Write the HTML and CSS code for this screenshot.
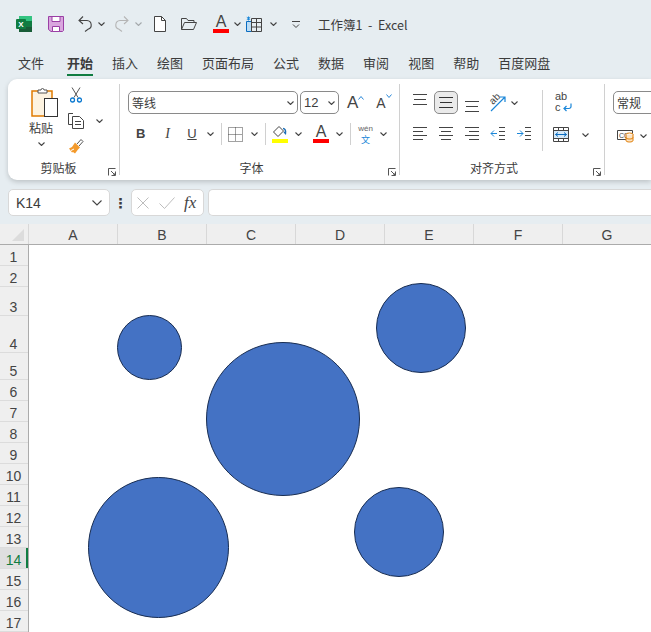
FILE: index.html
```html
<!DOCTYPE html>
<html lang="zh-CN">
<head>
  <meta charset="UTF-8" />
  <title>工作簿1 - Excel</title>
  <link rel="stylesheet" href="styles.css">
</head>
<body>
  <svg class="sprite">
    <symbol id="chev" viewBox="0 0 7 4"><path d="M.5.5l3 3 3-3" fill="none" stroke="#444" stroke-width="1.1"/></symbol>
    <symbol id="launcher" viewBox="0 0 8 8"><path d="M.5 7.5V.5h7M7.5 3.5v4h-4M3 3l4 4M5 7h2V5" fill="none" stroke="#555"/></symbol>
  </svg>

  <div class="titlebar">
    <svg class="qa-excel" viewBox="0 0 16 16">
      <rect x="3" y="0" width="13" height="16" rx="1" fill="#21a366"/>
      <rect x="3" y="0" width="13" height="5" rx="1" fill="#33c481"/>
      <rect x="9" y="5" width="7" height="5.500" fill="#107c41"/>
      <rect x="3" y="10.500" width="13" height="5.500" fill="#185c37"/>
      <rect x="0" y="3" width="10" height="10" rx="1" fill="#107c41"/>
      <text x="5" y="11" class="logo-x">X</text>
    </svg>
    <svg class="qa-save" viewBox="0 0 16 16">
      <path d="M.5.5h15v14l-1 1H3l-2.500-2z" fill="#d9a6de" stroke="#9a3fa5"/>
      <path d="M4 .5h8v5H4zM4.500 10.500h7v5h-7z" fill="#fff" stroke="#9a3fa5"/>
    </svg>
    <svg class="qa-undo" viewBox="0 0 15 16">
      <path d="M5 .5L1 4.500 5 8M1 4.500h8a4.500 4.500 0 0 1 1 8.800L7 15.500" fill="none" stroke="#444" stroke-width="1.100"/>
    </svg>
    <svg class="chev chev-undo"><use href="#chev"/></svg>
    <svg class="qa-redo" viewBox="0 0 15 16">
      <path d="M10 .5L14 4.500 10 8M14 4.500H6a4.500 4.500 0 0 0-1 8.800L8 15.500" fill="none" stroke="#b5b5b5" stroke-width="1.100"/>
    </svg>
    <svg class="chev chev-redo"><use href="#chev"/></svg>
    <svg class="qa-new" viewBox="0 0 12 16">
      <path d="M.5.5h7l4 4v11H.5z" fill="#fff" stroke="#444"/><path d="M7.500.5v4h4" fill="none" stroke="#444"/>
    </svg>
    <svg class="qa-open" viewBox="0 0 16 12">
      <path d="M.5 11.500V.5h5l1.500 2h6v2M.5 11.500h12l3-7H3.500z" fill="none" stroke="#444"/>
    </svg>
    <div class="color-a qa-color"><span>A</span><i class="bar-red"></i></div>
    <svg class="chev chev-color"><use href="#chev"/></svg>
    <svg class="qa-table" viewBox="0 0 16 16">
      <path d="M.5 5.500h5v10h-5z" fill="#bcdcf4" stroke="#0a6cc0"/>
      <path d="M5.500 2.500h10v13h-10zM5.500 6.500h10M5.500 11h10M10.500 2.500v13" fill="none" stroke="#444"/>
      <path d="M2.500.5v4M.8 1.300l3.400 2.400M4.200 1.300L.8 3.700" stroke="#1a86d8" fill="none"/>
    </svg>
    <svg class="chev chev-table"><use href="#chev"/></svg>
    <svg class="qa-more" viewBox="0 0 8 7">
      <path d="M0 .5h8M1 3.500l3 3 3-3" fill="none" stroke="#444"/>
    </svg>
    <span class="doc-title">工作簿1  -  Excel</span>
  </div>

  <div class="tabs">
    <span class="tab">文件</span>
    <span class="tab active">开始</span>
    <span class="tab">插入</span>
    <span class="tab">绘图</span>
    <span class="tab">页面布局</span>
    <span class="tab">公式</span>
    <span class="tab">数据</span>
    <span class="tab">审阅</span>
    <span class="tab">视图</span>
    <span class="tab">帮助</span>
    <span class="tab">百度网盘</span>
  </div>

  <div class="ribbon">
    <section class="group group-clip">
      <div class="group-body clip-body">
        <div class="paste">
          <svg class="paste-icon" viewBox="0 0 27 30">
            <rect x="1" y="4" width="20" height="25" fill="#fdf3e0" stroke="#e07b00" stroke-width="1.500"/>
            <path d="M7 6V3h3a1.500 1.500 0 0 1 3 0h3v3z" fill="#fff" stroke="#555"/>
            <rect x="13.500" y="11.500" width="13" height="18" fill="#fff" stroke="#333"/>
          </svg>
          <span class="paste-label">粘贴</span>
          <svg class="chev"><use href="#chev"/></svg>
        </div>
        <div class="clip-tools">
          <svg class="tool-cut" viewBox="0 0 12 16">
            <path d="M2 .5l6 10M10 .5l-6 10" stroke="#555" fill="none"/>
            <circle cx="2.500" cy="13" r="2" fill="none" stroke="#0a78d0" stroke-width="1.300"/>
            <circle cx="9.500" cy="13" r="2" fill="none" stroke="#0a78d0" stroke-width="1.300"/>
          </svg>
          <div class="copy-row">
            <svg class="tool-copy" viewBox="0 0 16 16">
              <path d="M5 .5H.5v11H4" fill="none" stroke="#444"/>
              <path d="M4.500 3.500h7l4 4v8h-11zM7 8.500h6M7 11.500h6" fill="#fff" stroke="#444"/>
            </svg>
            <svg class="chev"><use href="#chev"/></svg>
          </div>
          <svg class="tool-brush" viewBox="0 0 16 16">
            <path d="M9 5L13 .5l2 2-4 4.500" fill="#fff" stroke="#555"/>
            <path d="M7 3.500l5 5-2 2-3 4-2-1.500-1 .5-3-4 3-1.500z" fill="#f39a2c"/>
            <path d="M6 10l-3 1.500" stroke="#fff"/>
          </svg>
        </div>
      </div>
      <div class="group-label">剪贴板<svg class="launcher"><use href="#launcher"/></svg></div>
    </section>

    <section class="group group-font">
      <div class="group-body font-body">
        <div class="tool-row font-top">
          <div class="combo combo-font">等线<svg class="chev"><use href="#chev"/></svg></div>
          <div class="combo combo-size">12<svg class="chev"><use href="#chev"/></svg></div>
          <div class="size-btn grow">A<svg viewBox="0 0 6 4"><path d="M.5 3.500l2.500-3 2.500 3" fill="none" stroke="#2b88d8"/></svg></div>
          <div class="size-btn shrink">A<svg viewBox="0 0 6 4"><path d="M.5.5l2.500 3 2.500-3" fill="none" stroke="#2b88d8"/></svg></div>
        </div>
        <div class="tool-row font-bottom">
          <span class="txt-btn bold">B</span>
          <span class="txt-btn italic">I</span>
          <span class="txt-btn under">U</span>
          <svg class="chev c-u"><use href="#chev"/></svg>
          <i class="vsep s-a"></i>
          <svg class="tool-border" viewBox="0 0 15 15">
            <path d="M.5.5h14v14H.5zM7.500.5v14M.5 7.500h14" fill="none" stroke="#444" stroke-dasharray="1 1"/>
          </svg>
          <svg class="chev c-b"><use href="#chev"/></svg>
          <i class="vsep s-b"></i>
          <div class="fill-btn">
            <svg viewBox="0 0 16 12">
              <path d="M7 .5L1.500 6 6 10.500 11.500 5z" fill="#fff" stroke="#444"/>
              <path d="M11 2.500c2 0 3 2 2.500 5l-1.500-1.500" fill="none" stroke="#1f6fb5" stroke-width="1.400"/>
            </svg>
            <i class="bar-yellow"></i>
          </div>
          <svg class="chev c-f"><use href="#chev"/></svg>
          <div class="color-a a-font"><span>A</span><i class="bar-red"></i></div>
          <svg class="chev c-a"><use href="#chev"/></svg>
          <i class="vsep s-c"></i>
          <div class="wen"><span class="wen-top">wén</span><span class="wen-bot">文</span></div>
          <svg class="chev c-w"><use href="#chev"/></svg>
        </div>
      </div>
      <div class="group-label">字体<svg class="launcher"><use href="#launcher"/></svg></div>
    </section>

    <section class="group group-align">
      <div class="group-body align-body">
        <div class="align-grid">
          <svg class="al" viewBox="0 0 24 23"><path d="M5 3.500h14M6 8.500h12M5 13.500h14" fill="none" stroke="#444"/></svg>
          <div class="al-on"><svg class="al" viewBox="0 0 24 23"><path d="M5 6.500h14M6 11.500h12M5 16.500h14" fill="none" stroke="#333"/></svg></div>
          <svg class="al" viewBox="0 0 24 23"><path d="M5 10.500h14M6 15.500h12M5 20.500h14" fill="none" stroke="#444"/></svg>
          <div class="orient">
            <svg viewBox="0 0 18 18">
              <path d="M2 17L16 3M11 3h5v5" fill="none" stroke="#1a86d8" stroke-width="1.200"/>
              <text x="4" y="11" class="orient-txt" transform="rotate(-45 4 11)">ab</text>
            </svg>
            <svg class="chev"><use href="#chev"/></svg>
          </div>
          <svg class="al" viewBox="0 0 24 23"><path d="M5 5.500h14M5 9.500h10M5 13.500h14M5 17.500h10" fill="none" stroke="#444"/></svg>
          <svg class="al" viewBox="0 0 24 23"><path d="M5 5.500h14M7 9.500h10M5 13.500h14M7 17.500h10" fill="none" stroke="#444"/></svg>
          <svg class="al" viewBox="0 0 24 23"><path d="M5 5.500h14M9 9.500h10M5 13.500h14M9 17.500h10" fill="none" stroke="#444"/></svg>
          <svg class="al" viewBox="0 0 24 23"><path d="M13 5.500h6M13 9.500h6M13 13.500h6M13 17.500h6" fill="none" stroke="#444"/><path d="M5 11.500h6M8 8.500l-3 3 3 3" fill="none" stroke="#1a86d8"/></svg>
          <svg class="al" viewBox="0 0 24 23"><path d="M13 5.500h6M13 9.500h6M13 13.500h6M13 17.500h6" fill="none" stroke="#444"/><path d="M5 11.500h6M8 8.500l3 3-3 3" fill="none" stroke="#1a86d8"/></svg>
        </div>
        <i class="vsep-tall"></i>
        <div class="wrap-col">
          <div class="wrap-icon">
            <span>ab<br>c</span>
            <svg viewBox="0 0 9 9"><path d="M8 .5v3a2 2 0 0 1-2 2H1M3.500 3L1 5.500 3.500 8" fill="none" stroke="#1a86d8" stroke-width="1.200"/></svg>
          </div>
          <div class="merge-row">
            <svg class="tool-merge" viewBox="0 0 16 15">
              <rect x=".5" y="3.500" width="15" height="8" fill="#d5e9f8"/>
              <path d="M.5.5h15v14H.5zM.5 3.500h15M.5 11.500h15M5.500.5v3M10.500.5v3M5.500 11.500v3M10.500 11.500v3" fill="none" stroke="#444"/>
              <path d="M2.500 7.500h11M5 5.500l-2.500 2 2.500 2M11 5.500l2.500 2-2.500 2" fill="none" stroke="#0a6cc0"/>
            </svg>
            <svg class="chev"><use href="#chev"/></svg>
          </div>
        </div>
      </div>
      <div class="group-label">对齐方式<svg class="launcher"><use href="#launcher"/></svg></div>
    </section>

    <section class="group group-num">
      <div class="group-body num-body">
        <div class="combo combo-num">常规</div>
        <div class="num-tools">
          <svg class="tool-fmt" viewBox="0 0 17 14">
            <path d="M.5 1.500h15v9H.5z" fill="#fff" stroke="#444"/>
            <text x="2" y="8.500" class="fmt-txt">C0</text>
            <ellipse cx="12.500" cy="5.500" rx="3.500" ry="1.500" fill="#fff" stroke="#e07b00"/>
            <path d="M9 5.500v6c0 2 7 2 7 0v-6M9 8.500c0 2 7 2 7 0" fill="#fbe3c4" stroke="#e07b00"/>
          </svg>
          <svg class="chev"><use href="#chev"/></svg>
        </div>
      </div>
    </section>
  </div>

  <div class="formula-bar">
    <div class="name-box">K14<svg class="name-chev" viewBox="0 0 10 6"><path d="M.5.5l4.500 4.500 4.500-4.500" fill="none" stroke="#444" stroke-width="1.100"/></svg></div>
    <span class="dots">⋮</span>
    <div class="fx-box">
      <svg viewBox="0 0 12 12"><path d="M.5.5l11 11M11.500.5l-11 11" stroke="#bdbdbd" fill="none"/></svg>
      <svg viewBox="0 0 16 12"><path d="M.5 6.500l5 5 10-11" stroke="#bdbdbd" fill="none"/></svg>
      <span class="fx">fx</span>
    </div>
    <div class="formula-input"></div>
  </div>

  <div class="col-heads">
    <div class="corner"><i></i></div>
    <div class="col">A</div><div class="col">B</div><div class="col">C</div><div class="col">D</div>
    <div class="col">E</div><div class="col">F</div><div class="col">G</div>
  </div>

  <div class="sheet">
    <div class="row-heads">
      <div class="rh">1</div>
      <div class="rh">2</div>
      <div class="rh r3">3</div>
      <div class="rh r4">4</div>
      <div class="rh r5">5</div>
      <div class="rh">6</div>
      <div class="rh">7</div>
      <div class="rh">8</div>
      <div class="rh">9</div>
      <div class="rh">10</div>
      <div class="rh">11</div>
      <div class="rh">12</div>
      <div class="rh">13</div>
      <div class="rh current">14</div>
      <div class="rh">15</div>
      <div class="rh">16</div>
      <div class="rh">17</div>
    </div>
    <svg class="shapes" viewBox="0 0 622 387">
      <circle cx="120.500" cy="102.500" r="32"/>
      <circle cx="254" cy="174" r="76.500"/>
      <circle cx="392" cy="83" r="44.500"/>
      <circle cx="129.500" cy="302.500" r="70"/>
      <circle cx="370" cy="287" r="44.500"/>
    </svg>
  </div>
</body>
</html>
```

FILE: styles.css
```css
* {
  box-sizing: border-box;
}

html, body {
  margin: 0;
  height: 100%;
  overflow: hidden;
}

body {
  width: 651px;
  background-color: #e6edf1;
  color: #3c3c3c;
  font-family: "Noto Sans CJK SC", "Liberation Sans", sans-serif;
  font-size: 13px;
}

svg {
  display: block;
  flex: none;
}

i {
  display: block;
}

.sprite {
  position: absolute;
  width: 0;
  height: 0;
}

.chev {
  width: 7px;
  height: 4px;
}

/* quick access + title */
.titlebar {
  display: flex;
  align-items: center;
  height: 48px;
  padding-left: 16px;
}

.qa-excel { width: 16px; height: 16px; }
.logo-x { font: bold 8px "Liberation Sans", sans-serif; fill: #fff; text-anchor: middle; }
.qa-save { width: 16px; height: 16px; margin-left: 16px; }
.qa-undo { width: 15px; height: 16px; margin-left: 14px; }
.chev-undo { margin-left: 5px; }
.qa-redo { width: 15px; height: 16px; margin-left: 9px; }
.chev-redo { margin-left: 6px; opacity: .4; }
.qa-new { width: 12px; height: 16px; margin-left: 12px; }
.qa-open { width: 16px; height: 12px; margin-left: 15px; }
.qa-color { margin-left: 16px; }
.chev-color { margin-left: 5px; }
.qa-table { width: 16px; height: 16px; margin-left: 5px; }
.chev-table { margin-left: 8px; }
.qa-more { width: 8px; height: 7px; margin-left: 15px; }

.doc-title {
  margin-left: 18px;
  white-space: pre;
  font-size: 12.500px;
}

.color-a {
  display: flex;
  flex-direction: column;
  align-items: center;
  width: 16px;
  font: 16px/14px "Liberation Sans", sans-serif;
  color: #444;
}

.bar-red,
.bar-yellow {
  width: 16px;
  height: 4px;
  background-color: #f00;
}

.bar-yellow {
  background-color: #ff0;
}

/* tabs */
.tabs {
  display: flex;
  gap: 19px;
  height: 31px;
  padding-left: 18px;
}

.tab {
  height: 28px;
  line-height: 30px;
  color: #3c3c3c;
}

.tab.active {
  margin-left: 4px;
  font-weight: 700;
  border-bottom: 2px solid #107c41;
}

/* ribbon */
.ribbon {
  display: flex;
  width: 643px;
  height: 101px;
  margin-left: 8px;
  background-color: #fff;
  border-radius: 9px 0 0 9px;
  box-shadow: 0 2px 5px rgba(0, 0, 0, .18);
}

.group {
  flex: none;
  height: 91px;
  margin-top: 5px;
  border-right: 1px solid #d0d0d0;
}

.group-clip { width: 112px; }
.group-font { width: 280px; }
.group-align { width: 205px; }

.group-num {
  width: 46px;
  overflow: hidden;
  border-right: none;
}

.group-body {
  height: 77px;
}

.group-label {
  position: relative;
  height: 14px;
  padding-right: 16px;
  font-size: 12px;
  line-height: 14px;
  text-align: center;
}

.group-clip .group-label {
  padding-right: 10px;
}

.launcher {
  position: absolute;
  right: 3px;
  bottom: -1px;
  width: 8px;
  height: 8px;
}

.clip-body {
  display: flex;
  padding-top: 3px;
}

.paste {
  display: flex;
  flex-direction: column;
  align-items: center;
  width: 36px;
  margin-left: 15px;
}

.paste-icon { width: 27px; height: 30px; margin-left: 6px; }
.paste-label { font-size: 12px; line-height: 17px; margin-top: 2px; }
.paste .chev { margin-top: 6px; }

.clip-tools {
  display: flex;
  flex-direction: column;
  margin-left: 9px;
}

.tool-cut { width: 12px; height: 16px; margin-left: 2px; }
.copy-row { display: flex; align-items: center; margin-top: 10px; }
.tool-copy { width: 16px; height: 16px; }
.copy-row .chev { margin-left: 12px; }
.tool-brush { width: 16px; height: 16px; margin-top: 10px; }

.tool-row {
  display: flex;
  align-items: center;
}

.font-body {
  padding-top: 7px;
}

.font-top {
  height: 23px;
  padding-left: 8px;
}

.combo {
  display: flex;
  align-items: center;
  justify-content: space-between;
  flex: none;
  height: 23px;
  padding: 0 3px 0 3px;
  border: 1px solid #8a8a8a;
  border-radius: 5px;
  font-size: 12px;
}

.combo-font { width: 170px; }
.combo-size { width: 39px; margin-left: 2px; font-family: "Liberation Sans", sans-serif; font-size: 13px; }

.size-btn {
  display: flex;
  align-items: flex-start;
  font-family: "Liberation Sans", sans-serif;
  color: #444;
}

.size-btn svg { width: 6px; height: 4px; margin-top: 3px; }
.grow { margin-left: 8px; font-size: 17px; line-height: 20px; }
.shrink { margin-left: 12px; font-size: 14px; line-height: 20px; }
.shrink svg { margin-top: 1px; }

.font-bottom {
  height: 24px;
  margin-top: 8px;
  padding-left: 16px;
}

.txt-btn {
  font-family: "Liberation Sans", sans-serif;
  font-size: 13px;
  line-height: 16px;
  text-align: center;
  color: #444;
}

.bold { width: 8px; font-weight: 700; }
.italic { width: 7px; margin-left: 20px; font-family: "Liberation Serif", serif; font-style: italic; font-size: 14px; }
.under { width: 10px; margin-left: 16px; text-decoration: underline; }

.vsep {
  width: 1px;
  height: 22px;
  background-color: #d0d0d0;
}

.c-u { margin-left: 10px; }
.s-a { margin-left: 7px; }
.tool-border { width: 15px; height: 15px; margin-left: 6px; }
.c-b { margin-left: 8px; }
.s-b { margin-left: 7px; }
.fill-btn { width: 16px; margin-left: 6px; }
.fill-btn svg { width: 16px; height: 12px; }
.fill-btn .bar-yellow { margin-top: 1px; }
.c-f { margin-left: 7px; }
.a-font { margin-left: 11px; }
.c-a { margin-left: 7px; }
.s-c { margin-left: 7px; }
.c-w { margin-left: 7px; }

.wen {
  display: flex;
  flex-direction: column;
  align-items: center;
  width: 15px;
  margin: 1px 0 0 7px;
}

.wen-top { font: 8px/9px "Liberation Sans", sans-serif; color: #666; }
.wen-bot { font-size: 9px; line-height: 13px; color: #1a86d8; }

.align-body {
  display: flex;
  padding-top: 7px;
  padding-left: 8px;
}

.align-grid {
  display: grid;
  grid-template-columns: repeat(5, 24px);
  grid-auto-rows: 23px;
  column-gap: 2px;
  row-gap: 8px;
  width: 128px;
}

.al { width: 24px; height: 23px; }

.al-on {
  width: 24px;
  height: 23px;
  background-color: #eaeaea;
  border: 1px solid #8a8a8a;
  border-radius: 5px;
}

.al-on .al { margin: -1px; }

.orient {
  grid-column: span 2;
  display: flex;
  align-items: center;
  padding-left: 3px;
  gap: 4px;
}

.orient svg:first-child { width: 18px; height: 18px; overflow: visible; }
.orient-txt { font: 10px "Liberation Sans", sans-serif; fill: #444; }

.vsep-tall {
  flex: none;
  width: 1px;
  height: 61px;
  margin: -1px 0 0 6px;
  background-color: #d0d0d0;
}

.wrap-col {
  display: flex;
  flex-direction: column;
  padding-left: 10px;
}

.wrap-icon {
  display: flex;
  align-items: flex-end;
  height: 22px;
  margin-left: 2px;
  font: 11px/11px "Liberation Sans", sans-serif;
  color: #444;
}

.wrap-icon svg { width: 9px; height: 9px; margin: 0 0 1px -4px; }

.merge-row {
  display: flex;
  align-items: center;
  margin-top: 14px;
}

.tool-merge { width: 16px; height: 15px; }
.merge-row .chev { margin-left: 13px; }

.num-body {
  padding-top: 7px;
}

.combo-num {
  width: 60px;
  margin-left: 8px;
}

.num-tools {
  display: flex;
  align-items: center;
  margin: 15px 0 0 12px;
}

.tool-fmt { width: 17px; height: 14px; }
.fmt-txt { font: 7px "Liberation Sans", sans-serif; fill: #444; }
.num-tools .chev { margin-left: 6px; }

/* formula bar */
.formula-bar {
  display: flex;
  align-items: center;
  height: 44px;
  padding: 9px 0 8px 8px;
}

.name-box,
.fx-box,
.formula-input {
  flex: none;
  height: 27px;
  background-color: #fff;
  border: 1px solid #d8d8d8;
  border-radius: 5px;
}

.name-box {
  display: flex;
  align-items: center;
  justify-content: space-between;
  width: 102px;
  padding: 0 7px 0 7px;
  font: 14px "Liberation Sans", sans-serif;
}

.name-chev { width: 10px; height: 6px; }

.dots {
  flex: none;
  width: 21px;
  text-align: center;
  font: bold 14px "DejaVu Sans", sans-serif;
}

.fx-box {
  display: flex;
  align-items: center;
  width: 73px;
  padding-left: 5px;
}

.fx-box svg:nth-child(1) { width: 12px; height: 12px; }
.fx-box svg:nth-child(2) { width: 16px; height: 12px; margin-left: 10px; }

.fx {
  margin-left: 9px;
  font: italic 17px "Liberation Serif", serif;
  color: #444;
}

.formula-input {
  width: 443px;
  margin-left: 4px;
  border-right: none;
  border-radius: 5px 0 0 5px;
}

/* grid */
.col-heads {
  display: flex;
  height: 21px;
  background-color: #efefef;
  border-bottom: 1px solid #ababab;
}

.corner {
  display: flex;
  align-items: flex-end;
  justify-content: flex-end;
  flex: none;
  width: 29px;
  padding: 0 4px 3px 0;
  border-right: 1px solid #d8d8d8;
}

.corner i {
  width: 0;
  height: 0;
  border-left: 12px solid transparent;
  border-bottom: 12px solid #dcdcdc;
}

.col {
  flex: none;
  width: 89px;
  border-right: 1px solid #d8d8d8;
  text-align: center;
  font: 14px/22px "Liberation Sans", sans-serif;
  color: #444;
}

.col:last-child {
  width: 88px;
  border-right: none;
}

.sheet {
  position: relative;
  height: 387px;
  background-color: #fff;
}

.row-heads {
  width: 29px;
  height: 387px;
  overflow: hidden;
  background-color: #efefef;
  border-right: 1px solid #ababab;
}

.rh {
  display: flex;
  align-items: flex-end;
  justify-content: center;
  height: 21px;
  padding-right: 1px;
  border-bottom: 1px solid #dcdcdc;
  font: 14px/15px "Liberation Sans", sans-serif;
  color: #444;
}

.r3 { height: 29px; }
.r4 { height: 37px; }
.r5 { height: 27px; }

.rh.current {
  background-color: #dfdfdf;
  color: #107c41;
  box-shadow: inset -2px 0 0 #107c41;
}

.shapes {
  position: absolute;
  left: 29px;
  top: 0;
  width: 622px;
  height: 387px;
}

.shapes circle {
  fill: #4472c4;
  stroke: #172c51;
  stroke-width: 1;
}
```
